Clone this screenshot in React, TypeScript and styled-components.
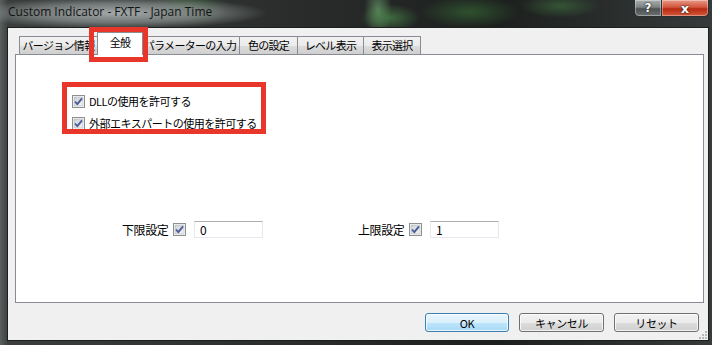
import React from 'react';
import styled, { createGlobalStyle } from 'styled-components';

const GlobalStyle = createGlobalStyle`
  html, body {
    margin: 0;
    padding: 0;
    background: #111;
  }
`;

const Window = styled.div`
  position: relative;
  width: 712px;
  height: 345px;
  display: flex;
  flex-direction: column;
  overflow: hidden;
  background:
    radial-gradient(ellipse 150px 16px at 118px 13px, rgba(170, 176, 176, 0.95), rgba(150, 156, 156, 0.6) 60%, transparent 100%),
    radial-gradient(ellipse 40px 20px at 190px 6px, rgba(70, 120, 70, 0.5), transparent),
    radial-gradient(ellipse 30px 14px at 390px 18px, rgba(80, 150, 80, 0.6), transparent),
    radial-gradient(ellipse 14px 26px at 378px 10px, rgba(120, 180, 120, 0.6), transparent),
    radial-gradient(ellipse 50px 16px at 470px 12px, rgba(60, 120, 60, 0.55), transparent),
    radial-gradient(ellipse 40px 12px at 560px 6px, rgba(70, 130, 70, 0.5), transparent),
    radial-gradient(ellipse 30px 10px at 660px 4px, rgba(60, 110, 60, 0.4), transparent),
    linear-gradient(90deg, #5a5f5f 0px, #3a3e3d 8px, #2a2d2c 40%, #1c1f1d 70%, #363a3a 100%);
`;

const TitleBar = styled.div`
  height: 27px;
  display: flex;
  align-items: flex-start;
  flex-shrink: 0;
`;

const Title = styled.div`
  padding: 4px 0 0 8px;
  font-family: "Open Sans", "Liberation Sans", sans-serif;
  font-size: 12px;
  line-height: 16px;
  color: #141414;
`;

const CaptionButtons = styled.div`
  margin-left: auto;
  margin-right: 3px;
  display: flex;
`;

const CaptionButton = styled.div<{ $close?: boolean }>`
  width: ${(p) => (p.$close ? 47 : 28)}px;
  height: 17px;
  box-sizing: border-box;
  display: flex;
  align-items: center;
  justify-content: center;
  border: 1px solid #2c2f2f;
  border-top: none;
  border-left: ${(p) => (p.$close ? 'none' : '1px solid #2c2f2f')};
  border-radius: ${(p) => (p.$close ? '0 0 5px 0' : '0 0 0 5px')};
  background: ${(p) =>
    p.$close
      ? 'linear-gradient(#e79a87 0%, #d2553d 45%, #b82a12 55%, #d4583b 100%)'
      : 'linear-gradient(#a9aeae 0%, #7c8282 45%, #4d5353 55%, #6b7171 100%)'};
  box-shadow: inset 0 0 0 1px rgba(255, 255, 255, 0.35);
  font-family: "DejaVu Sans", sans-serif;
  font-weight: bold;
  font-size: ${(p) => (p.$close ? 13 : 12)}px;
  color: #fff;
  text-shadow: 0 0 2px #222, 0 0 1px #000;
`;

const Client = styled.div`
  flex: 1;
  margin: 0 3px 4px 7px;
  border: 1px solid #1d1f1f;
  background: #f0f0f0;
  padding: 4px 4px 0 7px;
  display: flex;
  flex-direction: column;
  font-family: "Noto Sans CJK JP", "Liberation Sans", sans-serif;
  font-size: 12px;
  color: #000;
`;

const TabStrip = styled.div`
  height: 22px;
  display: flex;
  align-items: flex-end;
  padding-left: 4px;
`;

const Tab = styled.div<{ $active?: boolean; $w: number }>`
  position: relative;
  box-sizing: border-box;
  width: ${(p) => p.$w + (p.$active ? 4 : 0)}px;
  height: ${(p) => (p.$active ? 23 : 18)}px;
  margin: ${(p) => (p.$active ? '0 -2px -1px -2px' : '0')};
  z-index: ${(p) => (p.$active ? 2 : 1)};
  border: 1px solid #898c95;
  border-bottom: none;
  background: ${(p) => (p.$active ? '#fff' : 'linear-gradient(#f2f2f2 0%, #ebebeb 50%, #dddddd 51%, #cfcfcf 100%)')};
  display: flex;
  align-items: ${(p) => (p.$active ? 'flex-start' : 'center')};
  justify-content: center;
  padding-top: ${(p) => (p.$active ? '2px' : '0')};
  font-size: 11px;
  letter-spacing: -0.7px;
  line-height: 15px;
  white-space: nowrap;
  & + & {
    margin-left: ${(p) => (p.$active ? '-2px' : '-1px')};
  }
`;

const Panel = styled.div`
  height: 249px;
  box-sizing: border-box;
  background: #fff;
  border: 1px solid #898c95;
  display: flex;
  flex-direction: column;
`;

const CheckGroup = styled.div`
  margin-top: 35px;
  padding-left: 56px;
  display: flex;
  flex-direction: column;
`;

const CheckRow = styled.label`
  height: 22px;
  display: flex;
  align-items: center;
  gap: 4px;
  font-size: 11px;
  line-height: 16px;
  letter-spacing: -0.5px;
`;

const LimitRow = styled.div`
  margin-top: 87px;
  padding-left: 106px;
  display: flex;
  align-items: center;
  gap: 95px;
`;

const LimitField = styled.div`
  display: flex;
  align-items: center;
`;

const LimitLabel = styled.span`
  width: 51px;
  line-height: 16px;
  letter-spacing: -0.4px;
`;

const ValueInput = styled.div`
  margin-left: 8px;
  width: 69px;
  height: 17px;
  box-sizing: border-box;
  border: 1px solid #e3e9ef;
  border-top-color: #abadb3;
  background: #fff;
  padding: 0 5px;
  font-family: "Noto Sans CJK JP", "Liberation Sans", sans-serif;
  font-size: 12px;
  line-height: 15px;
`;

const ButtonRow = styled.div`
  margin-top: 10px;
  margin-right: 5px;
  display: flex;
  justify-content: flex-end;
  gap: 10px;
`;

const DialogButton = styled.div<{ $default?: boolean }>`
  width: ${(p) => (p.$default ? 84 : 85)}px;
  height: 19px;
  box-sizing: border-box;
  border: 1px solid ${(p) => (p.$default ? '#3c7fb1' : '#707070')};
  border-radius: 3px;
  background: ${(p) =>
    p.$default
      ? 'linear-gradient(#eaf6fd 0%, #d9f0fc 50%, #bee6fd 51%, #a7d9f5 100%)'
      : 'linear-gradient(#f2f2f2 0%, #ebebeb 50%, #dddddd 51%, #cfcfcf 100%)'};
  box-shadow: inset 0 0 0 1px rgba(255, 255, 255, 0.75);
  display: flex;
  align-items: center;
  justify-content: center;
  font-size: 11px;
  letter-spacing: -0.4px;
  line-height: 16px;
`;

const Annotation = styled.div<{ $x: number; $y: number; $w: number; $h: number }>`
  position: absolute;
  left: ${(p) => p.$x}px;
  top: ${(p) => p.$y}px;
  width: ${(p) => p.$w}px;
  height: ${(p) => p.$h}px;
  box-sizing: border-box;
  border: 5px solid #e8362b;
  z-index: 10;
  pointer-events: none;
`;

const Grip = styled.svg`
  position: absolute;
  right: 5px;
  bottom: 6px;
`;

const CheckBox = () => (
  <svg width="13" height="13" viewBox="0 0 13 13">
    <defs>
      <linearGradient id="cbg" x1="0" y1="0" x2="1" y2="1">
        <stop offset="0" stopColor="#cbcfd5" />
        <stop offset="1" stopColor="#f6f6f6" />
      </linearGradient>
    </defs>
    <rect x="0.5" y="0.5" width="12" height="12" fill="#fff" stroke="#8e8f8f" />
    <rect x="2" y="2" width="9" height="9" fill="url(#cbg)" stroke="#aeb3b9" strokeWidth="0.6" />
    <path d="M3 6.5 L5.3 9.2 L10 3.3" fill="none" stroke="#4a5f97" strokeWidth="1.9" strokeLinejoin="round" />
  </svg>
);

const tabs = [
  { label: 'バージョン情報', w: 79 },
  { label: '全般', w: 42, active: true },
  { label: 'パラメーターの入力', w: 100 },
  { label: '色の設定', w: 59 },
  { label: 'レベル表示', w: 67 },
  { label: '表示選択', w: 58 },
];

export default function App() {
  return (
    <>
      <GlobalStyle />
      <Window>
        <TitleBar>
          <Title>Custom Indicator - FXTF - Japan Time</Title>
          <CaptionButtons>
            <CaptionButton>?</CaptionButton>
            <CaptionButton $close>x</CaptionButton>
          </CaptionButtons>
        </TitleBar>
        <Client>
          <TabStrip>
            {tabs.map((t) => (
              <Tab key={t.label} $w={t.w} $active={t.active}>
                {t.label}
              </Tab>
            ))}
          </TabStrip>
          <Panel>
            <CheckGroup>
              <CheckRow>
                <CheckBox />
                DLLの使用を許可する
              </CheckRow>
              <CheckRow>
                <CheckBox />
                外部エキスパートの使用を許可する
              </CheckRow>
            </CheckGroup>
            <LimitRow>
              <LimitField>
                <LimitLabel>下限設定</LimitLabel>
                <CheckBox />
                <ValueInput>0</ValueInput>
              </LimitField>
              <LimitField>
                <LimitLabel>上限設定</LimitLabel>
                <CheckBox />
                <ValueInput>1</ValueInput>
              </LimitField>
            </LimitRow>
          </Panel>
          <ButtonRow>
            <DialogButton $default>OK</DialogButton>
            <DialogButton>キャンセル</DialogButton>
            <DialogButton>リセット</DialogButton>
          </ButtonRow>
        </Client>
        <Annotation $x={89} $y={27} $w={59} $h={35} />
        <Annotation $x={62} $y={82} $w={204} $h={52} />
        <Grip width="8" height="8" viewBox="0 0 8 8">
          <g fill="#b8b8b8">
            <rect x="6" y="0" width="2" height="2" />
            <rect x="3" y="3" width="2" height="2" />
            <rect x="6" y="3" width="2" height="2" />
            <rect x="0" y="6" width="2" height="2" />
            <rect x="3" y="6" width="2" height="2" />
            <rect x="6" y="6" width="2" height="2" />
          </g>
        </Grip>
      </Window>
    </>
  );
}
